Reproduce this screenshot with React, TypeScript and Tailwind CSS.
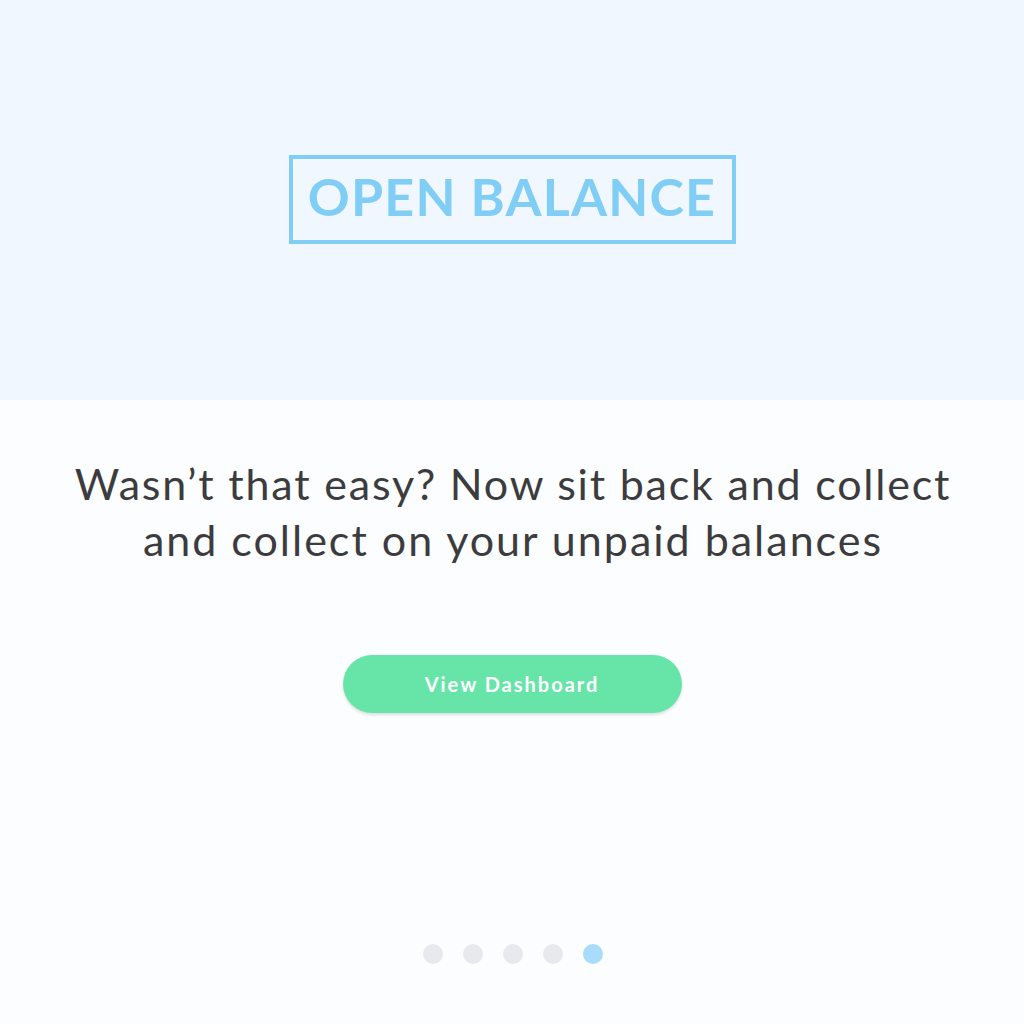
export default function App() {
  const dots = [false, false, false, false, true]

  return (
    <div className="flex h-[1024px] w-[1024px] flex-col bg-[#fcfdfe] font-['Lato','Open_Sans',sans-serif]">
      {/* Hero */}
      <div className="flex h-[400px] items-center justify-center bg-[#f1f7fe]">
        <div className="mt-[-2px] flex h-[89px] w-[447px] items-center justify-center border-[4px] border-[#80cef5]">
          <span className="mt-[-6px] text-[52px] font-bold leading-none tracking-[1.2px] text-[#80cef5]">OPEN BALANCE</span>
        </div>
      </div>

      {/* Body */}
      <div className="flex flex-1 flex-col items-center">
        <p className="mt-[56px] pl-[2px] text-center text-[43px] leading-[56px] tracking-[1.8px] text-[#3c3c3e]">
          Wasn’t that easy? Now sit back and collect
          <br />
          <span className="tracking-[2px]">and collect on your unpaid balances</span>
        </p>

        <button className="mt-[87px] h-[58px] w-[339px] rounded-full bg-[#67e5a9] text-[20px] font-bold tracking-[2px] text-white shadow-[0_2px_3px_rgba(0,0,0,0.12)]">
          View Dashboard
        </button>

        <div className="mt-auto mb-[60px] ml-[1px] flex gap-[20px]">
          {dots.map((active, i) => (
            <div
              key={i}
              className={`h-[20px] w-[20px] rounded-full ${active ? 'bg-[#a9dbfa]' : 'bg-[#e8e9ed]'}`}
            />
          ))}
        </div>
      </div>
    </div>
  )
}
